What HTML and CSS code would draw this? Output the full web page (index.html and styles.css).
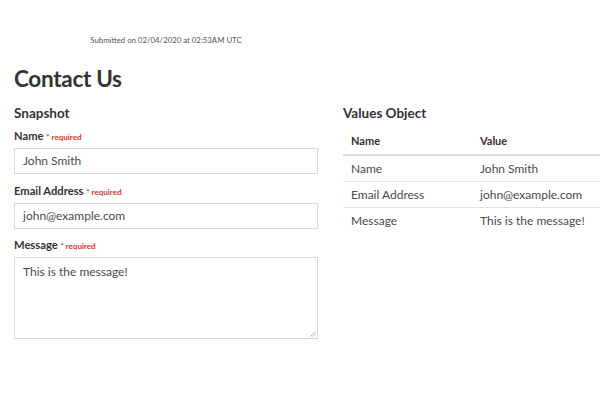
FILE: index.html
```html
<!DOCTYPE html>
<html>
<head>
<meta charset="utf-8">
<link rel="stylesheet" href="styles.css">
</head>
<body>
<div class="page">
  <div class="meta">Submitted on 02/04/2020 at 02:53AM UTC</div>
  <h1 class="title">Contact Us</h1>
  <div class="cols">
    <section class="form">
      <h2 class="sub">Snapshot</h2>
      <div class="field first">
        <div class="label">Name <span class="req">* required</span></div>
        <div class="input">John Smith</div>
      </div>
      <div class="field">
        <div class="label">Email Address <span class="req">* required</span></div>
        <div class="input">john@example.com</div>
      </div>
      <div class="field">
        <div class="label">Message <span class="req">* required</span></div>
        <div class="input area">This is the message!
          <svg class="grip" width="6" height="6" viewBox="0 0 6 6"><path d="M0.5 5.5 L5.5 0.5 M3 5.5 L5.5 3" stroke="#999" stroke-width="0.8"/></svg>
        </div>
      </div>
    </section>
    <section class="values">
      <h2 class="sub">Values Object</h2>
      <table class="tbl">
        <thead><tr><th>Name</th><th>Value</th></tr></thead>
        <tbody>
          <tr><td>Name</td><td>John Smith</td></tr>
          <tr><td>Email Address</td><td>john@example.com</td></tr>
          <tr><td>Message</td><td>This is the message!</td></tr>
        </tbody>
      </table>
    </section>
  </div>
</div>
</body>
</html>
```
FILE: styles.css
```css
html, body { margin: 0; padding: 0; overflow: hidden; }
body { font-family: "Lato", "Noto Sans", sans-serif; color: #333; background: #fff; width: 600px; }
.page { padding: 34px 0 0 14px; }
.meta { width: 304px; text-align: center; font-size: 7.8px; color: #555; height: 12px; line-height: 12px; }
.title { margin: 18px 0 0; font-size: 22.5px; letter-spacing: -0.3px; font-weight: 700; color: #333; line-height: 30px; height: 30px; }
.cols { display: grid; grid-template-columns: 304px 1fr; column-gap: 25px; margin-top: 9px; }
.sub { margin: 0; font-size: 13.5px; font-weight: 700; color: #333; line-height: 20px; height: 20px; }
.field { margin-top: 9px; }
.field.first { margin-top: 5px; }
.field:last-child { margin-top: 8px; }
.label { font-size: 11.2px; font-weight: 700; color: #333; line-height: 15px; height: 15px; }
.req { font-size: 8px; color: #d9332b; font-weight: 700; }
.input { margin-top: 5px; height: 24px; border: 1px solid #d8d8d8; font-size: 12px; color: #4a4a4a; line-height: 24px; padding: 0 8px; position: relative; }
.field:last-child .input { margin-top: 5px; }
.area { line-height: 16px; padding-top: 6px; box-sizing: border-box; height: 82px; }
.grip { position: absolute; right: 1px; bottom: 1px; }
.tbl { margin-top: 5px; width: 100%; border-collapse: collapse; font-size: 12px; }
.tbl th { text-align: left; font-weight: 700; font-size: 11px; color: #333; padding: 0 8px; height: 26px; line-height: 26px; border-bottom: 2px solid #ddd; }
.tbl td { padding: 0 8px; height: 25px; line-height: 25px; color: #4a4a4a; border-bottom: 1px solid #e3e3e3; white-space: nowrap; }
.tbl tr:last-child td { border-bottom: none; }
.tbl th:first-child, .tbl td:first-child { width: 113px; }
```
